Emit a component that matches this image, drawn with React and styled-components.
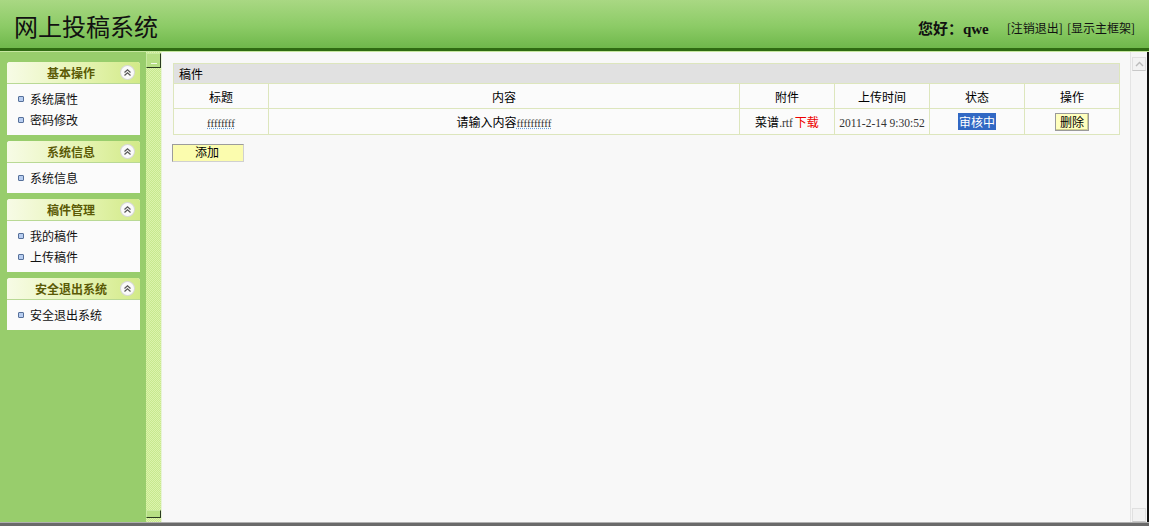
import React from "react";
import styled, { createGlobalStyle } from "styled-components";

const GlobalStyle = createGlobalStyle`
  html, body {
    margin: 0;
    padding: 0;
    height: 526px;
    overflow: hidden;
    background: #f8f8f8;
  }
  body {
    font-family: "Noto Sans CJK SC", "Liberation Sans", sans-serif;
    font-size: 12px;
    color: #000;
  }
`;

const menus = [
  { title: "基本操作", items: ["系统属性", "密码修改"] },
  { title: "系统信息", items: ["系统信息"] },
  { title: "稿件管理", items: ["我的稿件", "上传稿件"] },
  { title: "安全退出系统", items: ["安全退出系统"] },
];

const columns = [
  { name: "标题", width: 95 },
  { name: "内容", width: 471 },
  { name: "附件", width: 95 },
  { name: "上传时间", width: 95 },
  { name: "状态", width: 95 },
  { name: "操作", width: 95 },
];

function Chevron() {
  return (
    <svg width="9" height="9" viewBox="0 0 9 9">
      <path d="M1.5 4.5 L4.5 1.8 L7.5 4.5" fill="none" stroke="#555" strokeWidth="1.2" />
      <path d="M1.5 7.5 L4.5 4.8 L7.5 7.5" fill="none" stroke="#555" strokeWidth="1.2" />
    </svg>
  );
}

function App() {
  return (
    <Frame>
      <GlobalStyle />
      <Header>
        <Title>网上投稿系统</Title>
        <UserBox>
          <Hello>
            您好：<Name>qwe</Name>
          </Hello>
          <Links>
            <span>[注销退出]</span>
            <span>[显示主框架]</span>
          </Links>
        </UserBox>
      </Header>
      <Body>
        <Sidebar>
          {menus.map((m) => (
            <Panel key={m.title}>
              <PanelHead>
                <PanelTitle>{m.title}</PanelTitle>
                <Toggle>
                  <Chevron />
                </Toggle>
              </PanelHead>
              <PanelBody>
                {m.items.map((it) => (
                  <MenuItem key={it}>
                    <Bullet />
                    {it}
                  </MenuItem>
                ))}
              </PanelBody>
            </Panel>
          ))}
        </Sidebar>
        <Splitter>
          <SplitButton />
          <SplitButton $bottom />
        </Splitter>
        <Main>
          <Content>
            <Table>
              <colgroup>
                {columns.map((c) => (
                  <col key={c.name} style={{ width: c.width }} />
                ))}
              </colgroup>
              <tbody>
                <tr>
                  <Caption colSpan={6}>稿件</Caption>
                </tr>
                <tr>
                  {columns.map((c) => (
                    <Th key={c.name}>{c.name}</Th>
                  ))}
                </tr>
                <tr>
                  <Td>
                    <Mono>ffffffff</Mono>
                  </Td>
                  <Td>
                    请输入内容<Mono>ffffffffff</Mono>
                  </Td>
                  <Td>
                    菜谱<Serif>.rtf</Serif>
                    <Red>下载</Red>
                  </Td>
                  <Td>
                    <Serif>2011-2-14 9:30:52</Serif>
                  </Td>
                  <Td>
                    <Selected>审核中</Selected>
                  </Td>
                  <Td>
                    <DelButton>删除</DelButton>
                  </Td>
                </tr>
              </tbody>
            </Table>
            <AddButton>添加</AddButton>
          </Content>
          <Scrollbar>
            <ScrollArrow>
              <svg width="9" height="6" viewBox="0 0 9 6">
                <path d="M1 5 L4.5 1.5 L8 5" fill="none" stroke="#bbb" strokeWidth="1.4" />
              </svg>
            </ScrollArrow>
            <ScrollArrow $bottom />
          </Scrollbar>
        </Main>
      </Body>
      <BottomLine />
    </Frame>
  );
}

export default App;

const Frame = styled.div`
  width: 1149px;
  height: 526px;
  display: flex;
  flex-direction: column;
  overflow: hidden;
  position: relative;
`;

const Header = styled.div`
  height: 48px;
  flex-shrink: 0;
  box-sizing: border-box;
  background: linear-gradient(#a9d883, #8ccb66 55%, #6fb84b);
  border-bottom: 3px solid #2f6b12;
  box-shadow: 0 1px 0 #c6e6a0;
  display: flex;
  align-items: center;
  justify-content: space-between;
  padding: 0 14px;
  height: 51px;
`;

const Title = styled.h1`
  margin: 0;
  font-size: 24px;
  font-weight: 400;
  color: #111;
  padding-top: 2px;
`;

const UserBox = styled.div`
  display: flex;
  align-items: center;
  gap: 18px;
  padding-top: 6px;
`;

const Hello = styled.span`
  font-size: 15px;
  font-weight: 700;
  color: #111;
`;

const Name = styled.span`
  font-family: "Liberation Serif", serif;
  font-size: 15px;
`;

const Links = styled.span`
  display: flex;
  gap: 4px;
  font-size: 12px;
  color: #111;
`;

const Body = styled.div`
  flex: 1;
  display: flex;
  margin-top: 1px;
  min-height: 0;
`;

const Sidebar = styled.div`
  width: 146px;
  flex-shrink: 0;
  background: #98cd6c;
  padding: 10px 6px 0 7px;
  box-sizing: border-box;
  display: flex;
  flex-direction: column;
  gap: 6px;
`;

const Panel = styled.div`
  background: #fbfbfb;
  border-radius: 3px 3px 0 0;
`;

const PanelHead = styled.div`
  height: 21px;
  display: flex;
  align-items: center;
  justify-content: center;
  position: relative;
  border-radius: 3px 3px 0 0;
  background: linear-gradient(to right, #f7fbe6, #e6f4b4 55%, #d2ea88);
  border-bottom: 1px solid #b9d995;
`;

const PanelTitle = styled.span`
  font-weight: 700;
  font-size: 12px;
  color: #5b5a06;
  margin-left: -5px;
`;

const Toggle = styled.span`
  position: absolute;
  right: 6px;
  top: 4px;
  width: 13px;
  height: 13px;
  border-radius: 50%;
  background: #fafafa;
  box-shadow: 0 0 0 1px #d8d8d8;
  display: flex;
  align-items: center;
  justify-content: center;
`;

const PanelBody = styled.div`
  padding: 4px 0 5px 11px;
`;

const MenuItem = styled.div`
  height: 21px;
  display: flex;
  align-items: center;
  gap: 6px;
  font-size: 12px;
  color: #111;
`;

const Bullet = styled.span`
  width: 4px;
  height: 4px;
  border: 1px solid #56709a;
  background: #b7cdf0;
  border-radius: 1px;
`;

const Splitter = styled.div`
  width: 15px;
  flex-shrink: 0;
  position: relative;
  background-color: #d6f2a2;
  background-image: repeating-conic-gradient(#c7e88e 0 25%, #dcf4ad 0 50%);
  background-size: 2px 2px;
  border-right: 1px solid #e8f4d8;
`;

const SplitButton = styled.div`
  position: absolute;
  left: 0;
  ${(p) => (p.$bottom ? "bottom: 4px;" : "top: 1px;")}
  width: 13px;
  height: ${(p) => (p.$bottom ? "6px" : "13px")};
  background: #b6df84;
  border: 1px solid #c8eaa0;
  border-right-color: #2a3a20;
  border-bottom-color: #2a3a20;
  &::after {
    content: "";
    display: ${(p) => (p.$bottom ? "none" : "block")};
    position: absolute;
    left: 4px;
    top: 9px;
    width: 6px;
    height: 1px;
    background: #f4fbe8;
  }
`;

const Main = styled.div`
  flex: 1;
  display: flex;
  background: #f8f8f8;
  min-width: 0;
`;

const Content = styled.div`
  flex: 1;
  padding: 11px 0 0 10px;
`;

const Table = styled.table`
  width: 946px;
  border-collapse: collapse;
  table-layout: fixed;
  margin-left: 1px;
  font-size: 12px;
  background: #fbfbfb;
`;

const Caption = styled.td`
  height: 19px;
  padding: 0 5px;
  background: #e1e1e1;
  border: 1px solid #dde6bd;
  text-align: left;
`;

const Th = styled.td`
  height: 22px;
  border: 1px solid #dde6bd;
  text-align: center;
`;

const Td = styled.td`
  height: 23px;
  border: 1px solid #dde6bd;
  text-align: center;
  white-space: nowrap;
`;

const Mono = styled.span`
  font-family: "Liberation Serif", serif;
  font-size: 11px;
  color: #333;
  text-decoration: underline dotted #6aa0d8;
`;

const Serif = styled.span`
  font-family: "Liberation Serif", serif;
  font-size: 11.5px;
  color: #333;
`;

const Red = styled.span`
  color: #e00;
  margin-left: 2px;
`;

const Selected = styled.span`
  background: #3168c4;
  color: #fff;
  padding: 0 1px;
`;

const DelButton = styled.span`
  display: inline-block;
  padding: 0 4px;
  line-height: 16px;
  background: #ffffbe;
  border: 1px solid #9a9a9a;
  box-shadow: inset -1px -1px 0 #cfcf90;
`;

const AddButton = styled.div`
  height: 16px;
  width: 48px;
  margin-top: 9px;
  background: #fbfcae;
  border: 1px solid #9c9c9c;
  border-right-color: #d0d0d0;
  border-bottom-color: #d0d0d0;
  font-size: 12px;
  line-height: 14px;
  padding-left: 22px;
`;

const Scrollbar = styled.div`
  width: 16px;
  flex-shrink: 0;
  background: #f5f5f5;
  border-left: 1px solid #e4e4e4;
  border-right: 2px solid #111;
  position: relative;
`;

const ScrollArrow = styled.div`
  position: absolute;
  left: 1px;
  ${(p) => (p.$bottom ? "bottom: 0;" : "top: 5px;")}
  width: 12px;
  height: 12px;
  border: 1px solid #e0e0e0;
  border-bottom-color: #c8c8c8;
  background: #f2f2f2;
  display: flex;
  align-items: center;
  justify-content: center;
`;

const BottomLine = styled.div`
  height: 3px;
  flex-shrink: 0;
  background: #6a6a6a;
  border-top: 1px solid #b0b0b0;
`;
